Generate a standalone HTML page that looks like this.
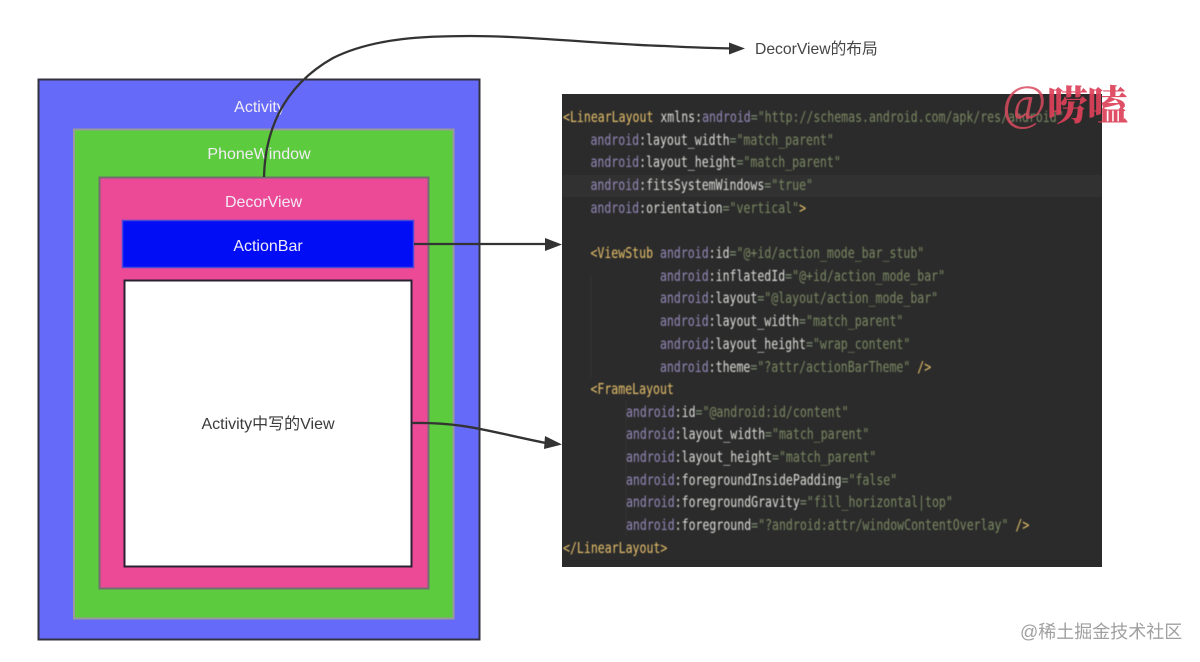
<!DOCTYPE html>
<html>
<head>
<meta charset="utf-8">
<style>
html,body{margin:0;padding:0;background:#fff;width:1200px;height:662px;overflow:hidden}
svg{display:block}
.l{font-family:"Liberation Sans","Noto Sans CJK SC",sans-serif}
.w{fill:#f1ecf6;font-size:16px}
.c{font-family:"DejaVu Sans Mono",monospace;font-size:15px;fill:#dcdcd8;white-space:pre}
.t{fill:#e6c06a}
.a{fill:#9488b8}
.v{fill:#7a8862}
.e{fill:#7c8a70}
</style>
</head>
<body>
<svg width="1200" height="662" viewBox="0 0 1200 662" xmlns="http://www.w3.org/2000/svg">
<defs>
<filter id="b" x="-5%" y="-5%" width="110%" height="110%"><feGaussianBlur stdDeviation="0.4"/></filter>
<filter id="s" x="-5%" y="-5%" width="110%" height="110%"><feGaussianBlur stdDeviation="0.3"/></filter>
</defs>
<g filter="url(#s)">
<rect x="38.500" y="79.500" width="441" height="560" fill="#666af8" stroke="#33333f" stroke-width="2"/>
<rect x="74" y="129.500" width="379.500" height="489" fill="#5ccb3c" stroke="#9a9a9a" stroke-width="2"/>
<rect x="99.500" y="177.500" width="329" height="411" fill="#ec4a96" stroke="#707070" stroke-width="2"/>
<rect x="122.500" y="220.500" width="291" height="47" fill="#0010f5" stroke="#4a48d8" stroke-width="1.500"/>
<rect x="124.500" y="280.500" width="287" height="286" fill="#fff" stroke="#2a2430" stroke-width="2"/>
</g>
<g class="l" filter="url(#s)">
<text class="w" x="259.500" y="112" text-anchor="middle">Activity</text>
<text class="w" x="259" y="159" text-anchor="middle">PhoneWindow</text>
<text class="w" x="263.500" y="207" text-anchor="middle">DecorView</text>
<text class="w" x="268" y="251" text-anchor="middle">ActionBar</text>
<text x="268" y="429" text-anchor="middle" font-size="16" fill="#3a3a3a">Activity中写的View</text>
<text x="755" y="54" font-size="15.700" fill="#444">DecorView的布局</text>
</g>

<rect x="562" y="94" width="540" height="473" fill="#2b2b2b"/>
<rect x="562" y="175" width="540" height="22" fill="#313131"/>
<path d="M591 275V378M626 400V536" stroke="#333" stroke-width="1" fill="none"/>
<g filter="url(#b)">
<g transform="translate(563,0) scale(.771,1)">
<text class="c" y="122"><tspan class="t">&lt;LinearLayout</tspan> xmlns:<tspan class="a">android</tspan><tspan class="e">=</tspan><tspan class="v">"http://schemas.android.com/apk/res/android"</tspan></text>
<text class="c" x="35.600" y="145"><tspan class="a">android</tspan>:layout_width<tspan class="e">=</tspan><tspan class="v">"match_parent"</tspan></text>
<text class="c" x="35.600" y="167"><tspan class="a">android</tspan>:layout_height<tspan class="e">=</tspan><tspan class="v">"match_parent"</tspan></text>
<text class="c" x="35.600" y="190"><tspan class="a">android</tspan>:fitsSystemWindows<tspan class="e">=</tspan><tspan class="v">"true"</tspan></text>
<text class="c" x="35.600" y="213"><tspan class="a">android</tspan>:orientation<tspan class="e">=</tspan><tspan class="v">"vertical"</tspan><tspan class="t">&gt;</tspan></text>
<text class="c" x="35.600" y="258"><tspan class="t">&lt;ViewStub</tspan> <tspan class="a">android</tspan>:id<tspan class="e">=</tspan><tspan class="v">"@+id/action_mode_bar_stub"</tspan></text>
<text class="c" x="125.800" y="281"><tspan class="a">android</tspan>:inflatedId<tspan class="e">=</tspan><tspan class="v">"@+id/action_mode_bar"</tspan></text>
<text class="c" x="125.800" y="303"><tspan class="a">android</tspan>:layout<tspan class="e">=</tspan><tspan class="v">"@layout/action_mode_bar"</tspan></text>
<text class="c" x="125.800" y="326"><tspan class="a">android</tspan>:layout_width<tspan class="e">=</tspan><tspan class="v">"match_parent"</tspan></text>
<text class="c" x="125.800" y="349"><tspan class="a">android</tspan>:layout_height<tspan class="e">=</tspan><tspan class="v">"wrap_content"</tspan></text>
<text class="c" x="125.800" y="372"><tspan class="a">android</tspan>:theme<tspan class="e">=</tspan><tspan class="v">"?attr/actionBarTheme"</tspan> <tspan class="t">/&gt;</tspan></text>
<text class="c" x="35.600" y="394"><tspan class="t">&lt;FrameLayout</tspan></text>
<text class="c" x="81.700" y="417"><tspan class="a">android</tspan>:id<tspan class="e">=</tspan><tspan class="v">"@android:id/content"</tspan></text>
<text class="c" x="81.700" y="439"><tspan class="a">android</tspan>:layout_width<tspan class="e">=</tspan><tspan class="v">"match_parent"</tspan></text>
<text class="c" x="81.700" y="462"><tspan class="a">android</tspan>:layout_height<tspan class="e">=</tspan><tspan class="v">"match_parent"</tspan></text>
<text class="c" x="81.700" y="485"><tspan class="a">android</tspan>:foregroundInsidePadding<tspan class="e">=</tspan><tspan class="v">"false"</tspan></text>
<text class="c" x="81.700" y="507"><tspan class="a">android</tspan>:foregroundGravity<tspan class="e">=</tspan><tspan class="v">"fill_horizontal|top"</tspan></text>
<text class="c" x="81.700" y="530"><tspan class="a">android</tspan>:foreground<tspan class="e">=</tspan><tspan class="v">"?android:attr/windowContentOverlay"</tspan> <tspan class="t">/&gt;</tspan></text>
<text class="c" y="553"><tspan class="t">&lt;/LinearLayout&gt;</tspan></text>
</g>
</g>

<g fill="none" stroke="#333" stroke-width="2.300">
<path d="M264 177C265 135 280 88 333 58C375 37 430 36 470 36C530 36 600 44 665 46C690 47.500 710 48 733 48.500"/>
<path d="M414 244H546"/>
<path d="M412 423C465 422 490 432 546 443"/>
</g>
<g fill="#333">
<path d="M729 42.500L745 48.500L729 54.500Z"/>
<path d="M545 238L562 244.500L545 251Z"/>
<path d="M545 436L562 444.500L544 449Z"/>
</g>

<g class="l">
<text x="1002" y="119" font-family="Liberation Serif" font-size="50" font-style="italic" fill="#d84a5e" fill-opacity=".85" textLength="44" lengthAdjust="spacingAndGlyphs">@</text>
<text x="1047" y="120" font-family="'Noto Serif CJK SC',serif" font-size="41" font-weight="900" fill="#dc4058" fill-opacity=".92" textLength="81" lengthAdjust="spacingAndGlyphs">唠嗑</text>
<text x="1020" y="638" font-size="18" fill="#a0a0a0" filter="url(#s)" font-family="'Liberation Sans','Noto Sans CJK SC',sans-serif">@稀土掘金技术社区</text>
</g>
</svg>
</body>
</html>
